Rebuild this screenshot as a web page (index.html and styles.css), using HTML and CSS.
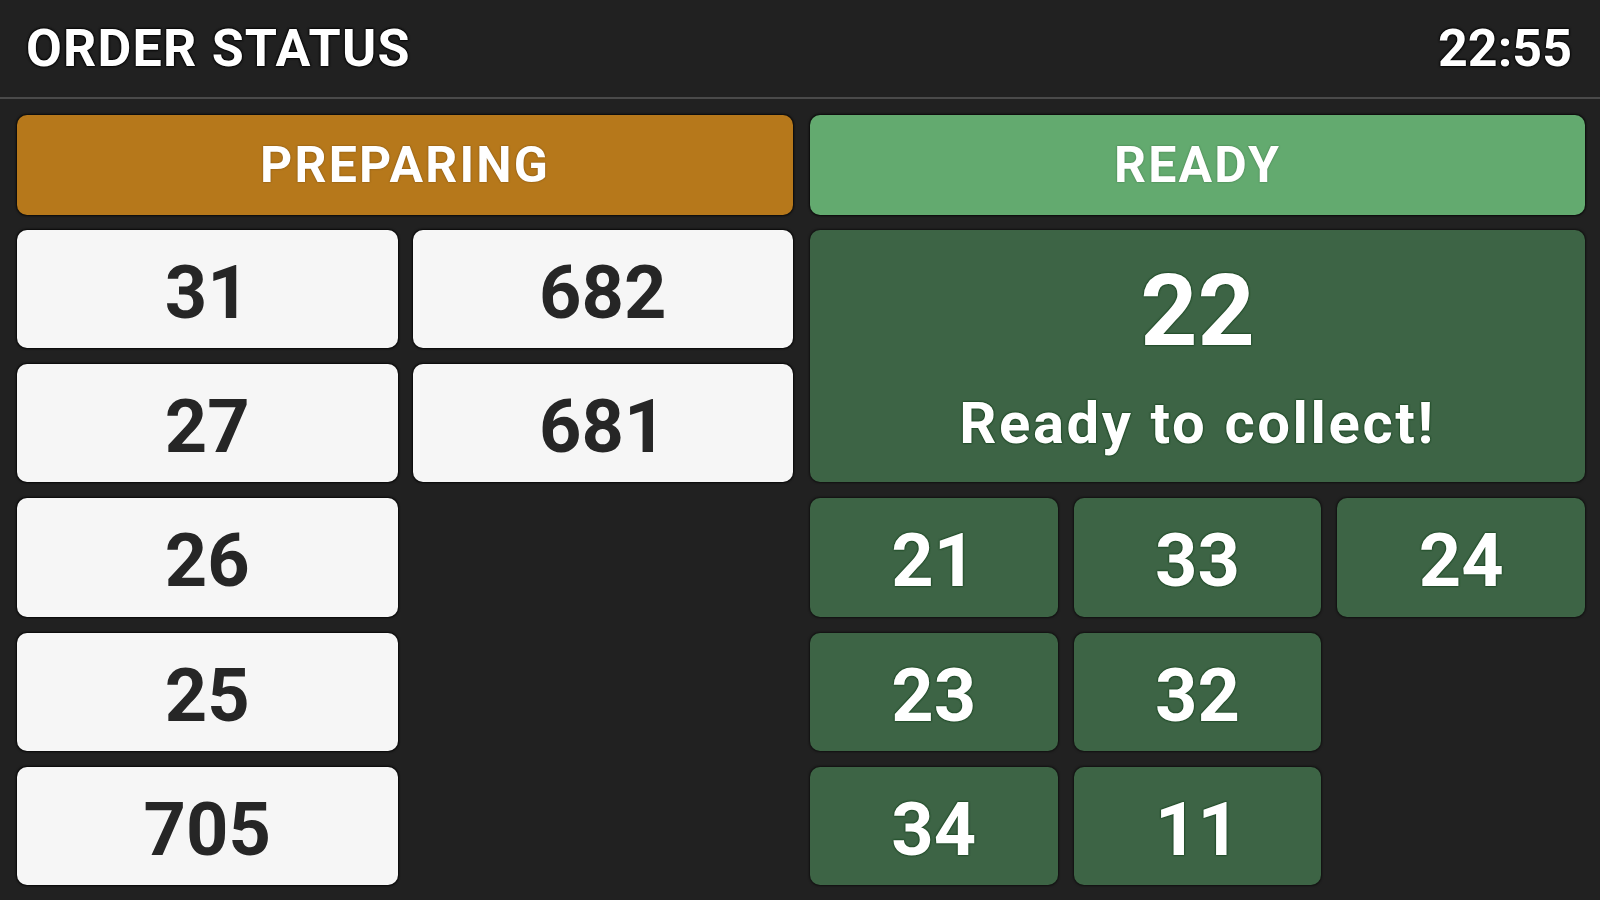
FILE: index.html
```html
<!DOCTYPE html>
<html lang="en">
<head>
<meta charset="utf-8">
<title>Order Status</title>
<link rel="stylesheet" href="styles.css">
</head>
<body>
<div class="app">
  <header class="topbar">
    <h1 class="title">ORDER STATUS</h1>
    <div class="clock">22:55</div>
  </header>
  <main class="board">
    <section class="column">
      <div class="bar bar-preparing">PREPARING</div>
      <div class="grid grid-preparing">
        <div class="card card-light">31</div>
        <div class="card card-light">682</div>
        <div class="card card-light">27</div>
        <div class="card card-light">681</div>
        <div class="card card-light">26</div>
        <div class="card card-empty"></div>
        <div class="card card-light">25</div>
        <div class="card card-empty"></div>
        <div class="card card-light">705</div>
      </div>
    </section>
    <section class="column">
      <div class="bar bar-ready">READY</div>
      <div class="grid grid-ready">
        <div class="card card-green card-feature">
          <div class="feature-number">22</div>
          <div class="feature-text">Ready to collect!</div>
        </div>
        <div class="card card-green">21</div>
        <div class="card card-green">33</div>
        <div class="card card-green">24</div>
        <div class="card card-green">23</div>
        <div class="card card-green">32</div>
        <div class="card card-empty"></div>
        <div class="card card-green">34</div>
        <div class="card card-green">11</div>
      </div>
    </section>
  </main>
</div>
</body>
</html>
```
FILE: styles.css
```css
* { box-sizing: border-box; }

html, body {
  margin: 0;
  padding: 0;
  background: #212121;
}

body {
  font-family: Roboto, "Liberation Sans", Arial, sans-serif;
  color: #ffffff;
}

.app {
  width: 1600px;
  height: 900px;
  display: flex;
  flex-direction: column;
  background: #212121;
}

.topbar {
  height: 99px;
  flex: 0 0 99px;
  display: flex;
  align-items: center;
  justify-content: space-between;
  padding: 0 28px 0 26px;
  border-bottom: 2px solid #4a4a4a;
}

.title, .clock {
  margin: 0;
  font-size: 52px;
  font-weight: 700;
  line-height: 1;
  color: #ffffff;
  text-shadow: 0 0 2px #000, 0 0 2px #000, 0 0 3px #000;
}

.title {
  letter-spacing: 1.2px;
}

.board {
  flex: 1;
  display: grid;
  grid-template-columns: 776px 775px;
  column-gap: 17px;
  padding: 16px 15px 15px 17px;
  min-height: 0;
}

.column {
  display: flex;
  flex-direction: column;
  gap: 15px;
  min-height: 0;
}

.bar {
  height: 100px;
  flex: 0 0 100px;
  border-radius: 10px;
  display: flex;
  align-items: center;
  justify-content: center;
  font-size: 50px;
  font-weight: 700;
  letter-spacing: 2.2px;
  color: #ffffff;
  box-shadow: 0 0 2px 1px rgba(0, 0, 0, 0.7);
}

.bar-preparing {
  background: #b6781b;
  text-shadow: 0 0 2px rgba(70, 40, 0, 0.6);
}

.bar-ready {
  background: #63aa6f;
  text-shadow: 0 0 2px rgba(20, 60, 25, 0.5);
}

.grid {
  flex: 1;
  display: grid;
  grid-template-rows: repeat(5, 1fr);
  row-gap: 16px;
  min-height: 0;
}

.grid-preparing {
  grid-template-columns: 1fr 1fr;
  column-gap: 15px;
}

.grid-ready {
  grid-template-columns: repeat(3, 1fr);
  column-gap: 16px;
}

.card {
  border-radius: 10px;
  display: flex;
  align-items: center;
  justify-content: center;
  padding-top: 8px;
  font-size: 74px;
  font-weight: 700;
  line-height: 1;
}

.card-light {
  background: #f6f6f6;
  color: #262626;
  box-shadow: 0 0 2px 1px rgba(0, 0, 0, 0.8);
}

.card-green {
  background: #3d6445;
  color: #ffffff;
  box-shadow: 0 0 2px 1px rgba(0, 0, 0, 0.5);
  text-shadow: 0 0 2px #0c3a14, 0 0 2px #0c3a14;
}

.card-empty {
  background: transparent;
}

.card-feature {
  grid-column: 1 / span 3;
  grid-row: 1 / span 2;
  flex-direction: column;
  gap: 33px;
  padding-top: 0;
}

.feature-number {
  font-size: 100px;
  line-height: 1;
}

.feature-text {
  font-size: 58px;
  line-height: 1;
  letter-spacing: 2.6px;
}
```
